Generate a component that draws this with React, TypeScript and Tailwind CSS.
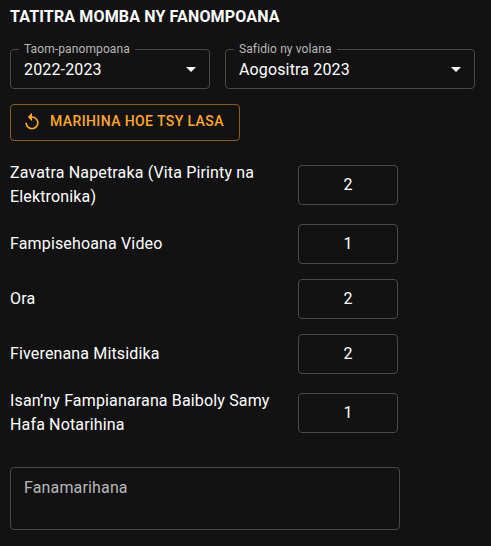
import React from 'react';

function Select({ label, value, width, labelWidth }: { label: string; value: string; width: string; labelWidth: string }) {
  return (
    <div className={`relative flex h-[40px] items-center rounded-[4px] border border-[#494949] pl-[13px] pr-[6px] ${width}`}>
      <span className={`absolute left-[8px] top-[-9px] bg-[#121212] pl-[5px] text-[12px] leading-[17px] tracking-[0.11px] text-[#b8b8b8] whitespace-nowrap ${labelWidth}`}>{label}</span>
      <span className="flex-1 text-[16px] leading-[23px] tracking-[0.15px] text-white whitespace-nowrap">{value}</span>
      <svg className="size-6" viewBox="0 0 24 24" fill="white"><path d="M7 10l5 5 5-5z" /></svg>
    </div>
  );
}

const rows = [
  { label: 'Zavatra Napetraka (Vita Pirinty na Elektronika)', value: '2', gap: 'h-[48px]' },
  { label: 'Fampisehoana Video', value: '1', gap: 'mt-[15px] h-[40px]' },
  { label: 'Ora', value: '2', gap: 'mt-[15px] h-[40px]' },
  { label: 'Fiverenana Mitsidika', value: '2', gap: 'mt-[15px] h-[40px]' },
  { label: 'Isan’ny Fampianarana Baiboly Samy Hafa Notarihina', value: '1', gap: 'mt-[15px] h-[48px]' },
];

export default function App() {
  return (
    <main className="h-[546px] w-[491px] overflow-hidden bg-[#121212] pl-[10px] pt-[5px] font-['Roboto',sans-serif] text-white">
      <h1 className="h-[24px] text-[16px] font-bold leading-[24px] tracking-[0.15px]">TATITRA MOMBA NY FANOMPOANA</h1>
      <div className="mt-[20px] flex gap-[15px]">
        <Select label="Taom-panompoana" value="2022-2023" width="w-[200px]" labelWidth="w-[116px]" />
        <Select label="Safidio ny volana" value="Aogositra 2023" width="w-[250px]" labelWidth="w-[103px]" />
      </div>
      <button className="mt-[15px] flex h-[37px] w-[230px] items-center rounded-[4px] border border-[#895d1c] pl-[11px] text-[14px] font-medium leading-[24px] tracking-[0.4px] text-[#ffa726]">
        <svg className="mb-px mr-[8px] size-5 shrink-0" viewBox="0 0 24 24" fill="currentColor"><path d="M12 5V1L7 6l5 5V7c3.31 0 6 2.69 6 6s-2.69 6-6 6-6-2.69-6-6H4c0 4.42 3.58 8 8 8s8-3.58 8-8-3.58-8-8-8z" /></svg>
        <span className="h-[27px] leading-[24px]">MARIHINA HOE TSY LASA</span>
      </button>
      <div className="mt-[20px]">
        {rows.map((row) => (
          <div key={row.label} className={`flex items-center ${row.gap}`}>
            <div className="w-[288px] pr-[10px] text-[16px] leading-[24px] tracking-[0.15px]">{row.label}</div>
            <div className="flex h-[40px] w-[100px] items-center justify-center rounded-[4px] border border-[#494949] text-[16px]">{row.value}</div>
          </div>
        ))}
      </div>
      <div className="mt-[30px] h-[63px] w-[390px] rounded-[4px] border border-[#494949] px-[13px] pt-[8px] text-[16px] leading-[23px] tracking-[0.15px] text-[#b8b8b8]">Fanamarihana</div>
    </main>
  );
}
